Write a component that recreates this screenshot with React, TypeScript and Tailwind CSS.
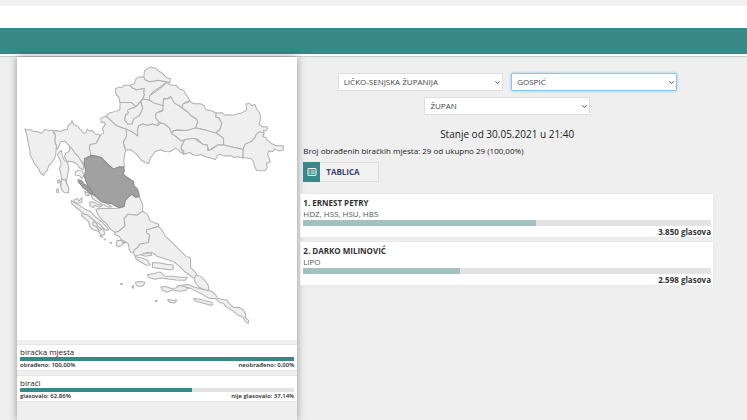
import { ChevronDown } from "lucide-react"

interface Candidate {
  id: number
  name: string
  parties: string
  votes: string
  share: number
}

interface TurnoutRow {
  title: string
  left: string
  right: string
  share: number
}

const CANDIDATES: Candidate[] = [
  { id: 1, name: "ERNEST PETRY", parties: "HDZ, HSS, HSU, HBS", votes: "3.850", share: 57 },
  { id: 2, name: "DARKO MILINOVIĆ", parties: "LiPO", votes: "2.598", share: 38.5 },
]

const TURNOUT: TurnoutRow[] = [
  { title: "biračka mjesta", left: "obrađeno: 100,00%", right: "neobrađeno: 0,00%", share: 100 },
  { title: "birači", left: "glasovalo: 62,86%", right: "nije glasovalo: 37,14%", share: 62.86 },
]

const COUNTIES = [
  // Istra
  "M27 221L34 225L44 224L53 229L62 229L75 234L80 232L83 225L90 223L98 227L105 225L112 227L113 235L118 240L117 262L121 270L119 300L115 310L105 325L98 332L94 345L87 353L82 361L73 352L66 338L58 330L48 310L42 300L42 288L38 270L34 246Z",
  // Primorje i Gorski kotar
  "M112 227L124 226L132 229L145 224L153 224L157 210L164 206L168 196L173 209L186 214L190 221L204 234L210 233L213 222L220 228L228 226L236 236L253 240L248 250L240 265L222 268L220 280L225 290L223 304L206 311L204 326L196 318L188 312L184 300L174 292L166 282L158 270L146 258L134 260L128 275L124 284L121 270L117 262L118 240Z",
  // Karlovac
  "M270 183L276 190L287 198L300 211L317 217L330 222L335 228L331 244L322 262L325 278L330 284L326 295L323 318L325 335L308 335L292 342L274 326L255 307L238 302L225 300L220 280L222 268L240 265L248 250L255 238L263 234L259 220L268 208L264 201L255 202L254 190Z",
  // Krapina i Zagorje
  "M298 102L306 97L318 97L325 91L340 91L350 99L362 104L385 100L383 112L385 120L379 132L367 147L359 155L345 142L318 144L310 140L310 129L300 118Z",
  // Zagrebačka
  "M270 183L280 174L298 169L311 164L312 142L345 142L359 155L340 162L337 175L328 180L326 195L335 207L348 206L352 192L370 180L380 160L374 138L382 132L400 135L412 138L442 152L440 165L421 174L418 187L428 198L424 212L408 207L395 211L380 207L368 212L364 224L365 243L350 232L330 222L317 217L300 211L287 198Z",
  // Grad Zagreb
  "M359 155L367 147L374 138L376 150L380 160L375 170L370 180L360 187L352 192L348 206L335 207L326 195L328 180L337 175L334 166L340 162L350 159Z",
  // Varaždin
  "M340 91L355 86L358 74L370 65L383 66L388 75L402 80L425 76L452 81L438 92L420 104L408 113L401 122L400 135L379 132L385 120L383 112L385 100L362 104L350 99Z",
  // Međimurje
  "M385 47L402 36L418 40L428 48L440 56L450 67L463 72L461 83L452 80L425 76L402 80L388 75L383 66Z",
  // Koprivnica i Križevci
  "M452 83L465 91L480 91L489 101L503 106L508 117L514 124L521 137L507 142L501 148L497 158L487 151L475 145L464 125L453 132L442 130L441 152L412 143L400 135L401 122L420 109Z",
  // Bjelovar i Bilogora
  "M442 132L453 132L464 125L475 145L487 151L497 158L514 170L525 182L540 191L545 200L537 222L511 226L483 224L470 228L466 235L460 219L445 207L430 202L418 189L420 174L440 168Z",
  // Virovitica i Podravina
  "M497 158L501 146L511 143L522 139L532 146L553 146L564 152L568 163L582 166L600 174L599 186L608 188L617 205L611 224L599 233L586 232L567 225L538 218L545 200L540 191L525 182L514 170Z",
  // Osijek i Baranja
  "M600 174L617 173L625 180L640 179L650 181L665 176L676 174L691 165L689 147L699 145L707 152L716 148L721 162L730 174L733 184L732 195L728 207L738 215L752 215L754 221L747 228L742 225L743 240L730 234L720 238L717 247L704 260L687 267L681 283L654 277L622 270L622 250L599 233L611 224L617 205L608 188L599 186Z",
  // Vukovar i Srijem
  "M743 234L739 245L749 247L753 256L765 265L781 272L801 272L801 285L788 288L775 282L770 289L757 288L754 297L758 307L762 320L750 325L753 337L746 347L721 346L714 332L712 320L704 310L681 308L680 283L687 267L704 260L717 247L720 238L730 230Z",
  // Požega i Slavonija
  "M466 235L473 226L511 226L538 219L567 225L599 234L622 250L622 270L604 270L591 277L578 287L573 270L560 268L544 252L520 251L504 255L494 257L480 245L467 240Z",
  // Brod i Posavina
  "M504 255L520 251L534 250L545 257L560 268L573 270L575 287L591 280L604 270L622 270L654 277L681 283L679 309L665 305L653 307L645 302L623 303L612 297L605 300L597 313L578 307L565 304L554 298L545 301L530 299L520 292L502 298L503 288L494 280Z",
  // Sisak i Moslavina
  "M330 222L350 232L365 243L364 224L368 212L380 207L395 211L408 207L424 212L433 204L445 207L460 219L466 235L480 245L494 257L504 258L497 268L494 280L503 296L493 292L487 286L478 279L462 290L445 289L432 284L416 290L410 300L402 309L398 325L388 323L374 314L364 300L352 290L345 284L329 285L322 262L331 244Z",
  // Zadar
  "M347 417L358 426L369 424L380 449L379 468L363 480L335 477L324 491L327 512L308 528L297 532L283 522L272 506L257 493L245 478L239 462L256 459L285 460L307 459L324 454L327 437Z",
  // Šibenik i Knin
  "M380 468L393 477L402 497L427 507L427 515L392 524L391 532L400 539L399 551L395 564L370 567L365 577L356 584L353 593L345 592L339 583L337 567L315 553L309 543L295 538L297 531L308 528L327 512L324 491L335 477L363 480Z",
  // Split i Dalmacija
  "M427 514L438 525L447 543L466 560L479 573L494 588L508 602L523 608L523 622L524 638L536 649L541 659L535 670L520 660L504 648L491 634L473 620L450 612L435 607L424 604L412 594L395 592L380 597L357 602L353 594L353 585L365 577L370 567L397 562L399 551L400 539L391 532L392 524Z",
  // Dubrovnik i Neretva
  "M541 659L555 665L569 679L577 692L577 704L568 705L550 697L538 684L533 670Z",
  "M486 691L517 688L535 696L556 701L586 708L598 718L604 729L620 733L632 734L640 746L653 757L670 757L682 765L688 777L687 786L697 795L696 805L688 800L681 786L666 780L650 767L630 755L622 745L608 740L598 730L580 730L561 718L538 707L525 700L505 695Z",
]

const ISLANDS = [
  "M128 292L136 286L139 303L145 316L155 322L158 342L154 362L151 380L155 396L158 412L146 408L137 402L132 387L137 372L134 355L130 340L136 327L131 312L124 300Z",
  "M160 276L168 281L176 294L187 304L195 318L203 330L201 344L189 337L180 325L168 319L155 319L145 306L149 294L160 288Z",
  "M178 350L188 345L198 348L204 360L197 371L191 362L177 360Z",
  "M124 377L130 374L132 380L126 384Z",
  "M122 402L127 401L127 412L122 411Z",
  "M136 374L148 373L152 386L158 397L158 409L151 414L143 411L137 404L134 394Z",
  "M173 435L184 430L189 438L198 427L197 442L185 444L176 442Z",
  "M165 436L175 442L192 452L210 464L224 470L238 485L256 499L270 513L278 523L271 526L256 515L240 503L223 489L206 479L188 463L168 447Z",
  "M206 409L214 413L220 421L210 421Z",
  "M221 440L234 441L244 447L258 451L250 456L234 450L233 458L222 452Z",
  "M224 415L238 424L248 433L267 442L288 455L276 456L257 447L241 438L229 430Z",
  "M198 475L214 479L227 490L240 501L254 509L263 525L266 537L255 541L247 528L231 524L220 512L218 500L205 488L196 481Z",
  "M231 500L240 503L245 514L257 522L250 527L240 514L230 509Z",
  "M302 557L315 555L320 562L330 560L318 568L309 575L300 570Z",
  "M357 604L376 608L394 615L402 629L390 630L375 621L360 612Z",
  "M374 599L388 594L405 593L407 600L387 603Z",
  "M409 622L430 623L455 628L470 629L472 639L465 644L442 641L409 637Z",
  "M394 658L416 655L426 650L435 652L445 662L467 663L492 666L514 666L507 675L480 674L455 671L435 668L416 672L398 667Z",
  "M434 695L450 694L464 700L480 698L488 691L504 694L517 698L507 706L488 708L470 704L452 710L440 705Z",
  "M358 681L372 679L386 681L382 691L368 694L360 689Z",
  "M350 691L353 692L351 699L348 697Z",
  "M454 733L470 735L482 734L476 743L462 742Z",
  "M532 730L546 731L565 736L584 740L590 747L583 750L562 744L540 739Z",
  "M418 736L423 736L422 739L418 739Z",
  "M314 685L318 685L318 688L314 688Z",
  "M264 551L268 552L267 555Z",
  "M282 562L286 562L285 566Z",
  "M252 542L257 541L259 546L253 545Z",
]

const SELECTED_COUNTY =
  "M206 311L225 301L238 303L255 307L274 326L292 342L308 336L323 336L325 349L320 355L330 365L340 371L352 379L354 392L364 402L368 414L370 424L358 426L347 417L335 425L327 437L324 454L307 457L287 446L270 443L256 440L246 429L232 417L225 405L216 392L210 380L205 365L208 345L205 330Z"
const SELECTED_ISLAND = "M186 374L197 377L205 388L213 391L218 400L225 406L230 417L222 416L212 405L200 397L194 388L187 382Z"

function CountyMap() {
  return (
    <svg viewBox="3 6 840 848" className="block w-full" role="img" aria-label="Karta županija">
      <g fill="#efefef" stroke="#b0b0b0" strokeWidth="3" strokeLinejoin="round">
        {COUNTIES.map((d) => (
          <path key={d} d={d} />
        ))}
        {ISLANDS.map((d) => (
          <path key={d} d={d} />
        ))}
      </g>
      <g fill="#a1a1a1" stroke="#888" strokeWidth="3" strokeLinejoin="round">
        <path d={SELECTED_COUNTY} />
        <path d={SELECTED_ISLAND} />
      </g>
    </svg>
  )
}

function SelectBox({ label, value, active }: { label: string; value: string; active?: boolean }) {
  return (
    <div className="relative w-2/5">
      <select
        aria-label={label}
        defaultValue={value}
        className={`block h-[18px] w-full appearance-none border bg-white pl-[5px] text-[8px] leading-4 text-[#444] outline-none ${
          active ? "rounded-xs border-[#8ec3ec] shadow-[0_0_3px_#8ec3ec]" : "border-[#dedede]"
        }`}
      >
        <option>{value}</option>
      </select>
      <ChevronDown className="pointer-events-none absolute top-[6px] right-[2px] size-[7px] text-[#333]" strokeWidth={3} />
    </div>
  )
}

function TableIcon() {
  return (
    <svg viewBox="0 0 10 10" className="size-[10px]" fill="none" stroke="#fff">
      <rect x="1" y="1.5" width="8" height="7" rx="0.5" />
      <path d="M2.3 3.7h1M4 3.7h3.7M2.3 5.2h1M4 5.2h3.7M2.3 6.7h1M4 6.7h3.7" strokeWidth="0.7" />
    </svg>
  )
}

function TurnoutCard({ row }: { row: TurnoutRow }) {
  return (
    <div className="border-y border-[#e6e6e6] bg-white px-[3px] pt-[2px] pb-px">
      <h3 className="text-[8px] leading-[10px]">{row.title}</h3>
      <div className="h-[4px] bg-[#e3e3e3]">
        <div className="h-full bg-[#3a8886]" style={{ width: `${row.share}%` }} />
      </div>
      <div className="flex justify-between text-[6px] leading-[8px] font-semibold">
        <span>{row.left}</span>
        <span>{row.right}</span>
      </div>
    </div>
  )
}

function CandidateCard({ candidate }: { candidate: Candidate }) {
  return (
    <li className="border border-[#eaeaea] bg-white px-[2px] pt-[3px]">
      <h3 className="text-[8px] leading-[11px] font-bold text-[#333]">
        {candidate.id}. {candidate.name}
      </h3>
      <p className="text-[8px] leading-[12px] text-[#555]">{candidate.parties}</p>
      <div className="h-[6px] bg-[#e3e3e3]">
        <div className="h-full bg-[#a2c1bf]" style={{ width: `${candidate.share}%` }} />
      </div>
      <p className="text-right text-[8px] leading-[11px] font-bold text-[#333]">{candidate.votes} glasova</p>
    </li>
  )
}

export default function App() {
  return (
    <div className="flex min-h-screen flex-col bg-[#efefef] font-['Open_Sans','Noto_Sans',sans-serif] text-[#222]">
      <header className="border-b border-[#c5cccc] bg-white pb-[2px]">
        <div className="h-[6px] bg-[#f1f1f4]" />
        <div className="h-[22px]" />
        <div className="h-[26px] bg-[#378887]" />
      </header>

      <main className="flex flex-1 pl-[17px]">
        <aside className="flex w-[38.4%] shrink-0 flex-col gap-[4px] bg-[#efefef] shadow-[0_0_8px_rgba(0,0,0,0.4)]">
          <div className="bg-white">
            <CountyMap />
          </div>
          {TURNOUT.map((row) => (
            <TurnoutCard key={row.title} row={row} />
          ))}
        </aside>

        <section className="min-w-0 flex-1 pt-[16px] pr-[33px] pl-[3px]">
          <div className="flex flex-wrap justify-center gap-x-[8px] gap-y-[6px]">
            <SelectBox label="Županija" value="LIČKO-SENJSKA ŽUPANIJA" />
            <SelectBox label="Grad ili općina" value="GOSPIĆ" active />
            <SelectBox label="Izbori" value="ŽUPAN" />
          </div>

          <h2 className="mt-[12px] text-center text-[10px] leading-[14px]">Stanje od 30.05.2021 u 21:40</h2>
          <p className="mt-[4px] pl-[3px] text-[8px] leading-[12px]">
            Broj obrađenih biračkih mjesta: 29 od ukupno 29 (100,00%)
          </p>

          <button
            type="button"
            className="mt-[5px] ml-[3px] flex h-[20px] w-[76px] items-center border border-[#dedede] bg-[#f1f1f1] text-[8px] font-bold text-[#3c4470]"
          >
            <span className="-my-px -ml-px flex h-[20px] w-[17px] items-center justify-center bg-[#378887]">
              <TableIcon />
            </span>
            <span className="ml-[6px]">TABLICA</span>
          </button>

          <ul className="mt-[11px] flex flex-col gap-[3px]">
            {CANDIDATES.map((candidate) => (
              <CandidateCard key={candidate.id} candidate={candidate} />
            ))}
          </ul>
        </section>
      </main>
    </div>
  )
}
